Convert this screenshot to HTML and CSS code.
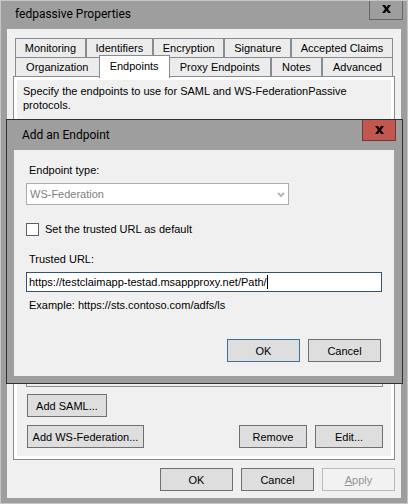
FILE: index.html
```html
<!DOCTYPE html>
<html lang="en">
<head>
<meta charset="utf-8">
<title>fedpassive Properties</title>
<link rel="stylesheet" href="styles.css">
</head>
<body>
<main class="window">
  <header class="titlebar">
    <h1 class="title">fedpassive Properties</h1>
    <button class="close" type="button" aria-label="Close">
      <svg class="cross" viewBox="0 0 9 8" aria-hidden="true"><path d="M0 0h3l1.500 2.200L6 0h3L6 4l3 4H6L4.500 5.800 3 8H0l3-4z"/></svg>
    </button>
  </header>
  <div class="client">
    <div class="tabs" role="tablist">
      <div class="tab-row">
        <button class="tab" role="tab" type="button">Monitoring</button>
        <button class="tab" role="tab" type="button">Identifiers</button>
        <button class="tab" role="tab" type="button">Encryption</button>
        <button class="tab" role="tab" type="button">Signature</button>
        <button class="tab" role="tab" type="button">Accepted Claims</button>
      </div>
      <div class="tab-row">
        <button class="tab" role="tab" type="button">Organization</button>
        <button class="tab tab-active" role="tab" type="button" aria-selected="true">Endpoints</button>
        <button class="tab" role="tab" type="button">Proxy Endpoints</button>
        <button class="tab" role="tab" type="button">Notes</button>
        <button class="tab" role="tab" type="button">Advanced</button>
      </div>
    </div>
    <section class="panel" role="tabpanel">
      <p class="intro">Specify the endpoints to use for SAML and WS-FederationPassive protocols.</p>
      <div class="list"></div>
      <div class="actions">
        <button class="button button-saml" type="button">Add SAML...</button>
      </div>
      <div class="actions">
        <button class="button button-wsfed" type="button">Add WS-Federation...</button>
        <span class="spacer"></span>
        <button class="button button-small" type="button">Remove</button>
        <button class="button button-small" type="button">Edit...</button>
      </div>
    </section>
    <footer class="footer">
      <button class="button" type="button">OK</button>
      <button class="button" type="button">Cancel</button>
      <button class="button" type="button" disabled><u>A</u>pply</button>
    </footer>
  </div>

  <form class="dialog" role="dialog" aria-labelledby="dialog-title">
    <header class="titlebar dialog-titlebar">
      <h2 class="title" id="dialog-title">Add an Endpoint</h2>
      <button class="close close-red" type="button" aria-label="Close">
        <svg class="cross" viewBox="0 0 9 8" aria-hidden="true"><path d="M0 0h3l1.500 2.200L6 0h3L6 4l3 4H6L4.500 5.800 3 8H0l3-4z"/></svg>
      </button>
    </header>
    <div class="dialog-body">
      <label class="label" for="type">Endpoint type:</label>
      <div class="select-wrap">
        <select class="select" id="type" disabled><option>WS-Federation</option></select>
        <svg class="chevron" viewBox="0 0 8 6" aria-hidden="true"><path d="M1 1l3 3 3-3"/></svg>
      </div>
      <label class="check"><input class="checkbox" type="checkbox">Set the trusted URL as default</label>
      <label class="label" for="url">Trusted URL:</label>
      <div class="input-wrap">
        <input class="input" id="url" type="text" value="https://testclaimapp-testad.msappproxy.net/Path/">
        <span class="caret"></span>
      </div>
      <p class="example">Example: https://sts.contoso.com/adfs/ls</p>
      <div class="footer dialog-footer">
        <button class="button button-default" type="button">OK</button>
        <button class="button" type="button">Cancel</button>
      </div>
    </div>
  </form>
</main>
</body>
</html>
```

FILE: styles.css
```css
* {
  box-sizing: border-box;
}

body {
  margin: 0;
  font: 11px/14px "Liberation Sans", Arial, sans-serif;
  color: #000;
}

button,
input,
select {
  margin: 0;
  font: inherit;
  color: inherit;
}

p,
h1,
h2 {
  margin: 0;
}

.window {
  position: relative;
  display: flex;
  flex-direction: column;
  min-height: 100vh;
  padding: 0 6px 5px 6px;
  background: #9e9e9e;
  border: 1px solid #c6c6c6;
}

.titlebar {
  display: flex;
  justify-content: space-between;
  align-items: flex-start;
  height: 28px;
  padding-left: 8px;
}

.title {
  font: 12px/26px Roboto, "Open Sans", sans-serif;
}

.close {
  display: flex;
  align-items: center;
  justify-content: center;
  width: 34px;
  height: 19px;
  margin-right: -2px;
  padding: 0 0 2px;
  background: #9e9e9e;
  border: 1px solid #666;
  border-top: 0;
}

.cross {
  width: 9px;
  height: 8px;
  fill: #080808;
}

.client {
  flex: 1;
  display: flex;
  flex-direction: column;
  padding: 9px 6px 7px;
  background: #f0f0f0;
}

.tabs {
  padding: 0 2px;
}

.tab-row {
  display: flex;
}

.tab {
  flex: 1 1 auto;
  height: 19px;
  padding: 0;
  background: #ececec;
  border: 1px solid #888b92;
  border-bottom: 0;
}

.tab-active {
  position: relative;
  height: 23px;
  margin: -2px -1px;
  padding: 0 0 2px;
  background: #fff;
}

.panel {
  flex: 1;
  display: flex;
  flex-direction: column;
  padding: 4px 7px 7px 9px;
  background: #f0f0f0;
  border: 1px solid #888b92;
  box-shadow: inset 0 0 0 3px #fff;
}

.panel .intro {
  padding: 3px 0 0;
}

.list {
  flex: 1;
  margin: 8px 4px 7px 3px;
  border: 1px solid #888b92;
}

.actions {
  display: flex;
  gap: 8px;
  padding: 0 4px 8px;
}

.actions:last-child {
  padding-bottom: 4px;
}

.spacer {
  flex: 1;
}

.button {
  width: 73px;
  height: 23px;
  padding: 0;
  background: #dedede;
  border: 1px solid #707070;
}

.button:disabled {
  color: #949494;
  background: #f2f2f2;
  border-color: #bababa;
}

.button-small {
  width: 68px;
}

.button-saml {
  width: 80px;
}

.button-wsfed {
  width: 117px;
}

.button-default {
  border-color: #3c7199;
}

.footer {
  display: flex;
  justify-content: flex-end;
  gap: 8px;
  padding-top: 8px;
}

.dialog {
  position: absolute;
  top: 118px;
  left: 5px;
  right: 4px;
  padding: 0 8px 7px 7px;
  background: #9e9e9e;
  border: 1px solid #303030;
}

.dialog-titlebar {
  height: 30px;
}

.dialog-titlebar .title {
  line-height: 30px;
}

.close-red {
  height: 21px;
  padding: 0;
  background: #c2574f;
  border-color: #6b3936;
}

.dialog-body {
  display: flex;
  flex-direction: column;
  padding: 13px 12px 14px;
  background: #f0f0f0;
}

.label,
.example {
  padding-left: 3px;
}

.label {
  padding-bottom: 6px;
}

.select-wrap,
.input-wrap {
  position: relative;
}

.select-wrap {
  width: 74%;
}

.select {
  display: block;
  width: 100%;
  height: 22px;
  padding: 0 3px;
  appearance: none;
  color: #808080;
  opacity: 1;
  background: #fff;
  border: 1px solid #adadad;
  border-radius: 0;
}

.chevron {
  position: absolute;
  top: 9px;
  right: 4px;
  width: 8px;
  height: 6px;
  fill: none;
  stroke: #b5b5b5;
  stroke-width: 2;
}

.check {
  display: flex;
  align-items: center;
  gap: 6px;
  padding: 17px 0 16px;
}

.checkbox {
  width: 13px;
  height: 13px;
  appearance: none;
  background: #fff;
  border: 1px solid #606060;
}

.input {
  display: block;
  width: 100%;
  height: 20px;
  padding: 0 2px;
  background: #fff;
  border: 1px solid #2f5570;
  outline: 0;
}

.caret {
  position: absolute;
  top: 3px;
  left: 241px;
  width: 1px;
  height: 14px;
  background: #000;
}

.example {
  padding-top: 6px;
}

.dialog-footer {
  padding: 27px 1px 0 0;
}
```
